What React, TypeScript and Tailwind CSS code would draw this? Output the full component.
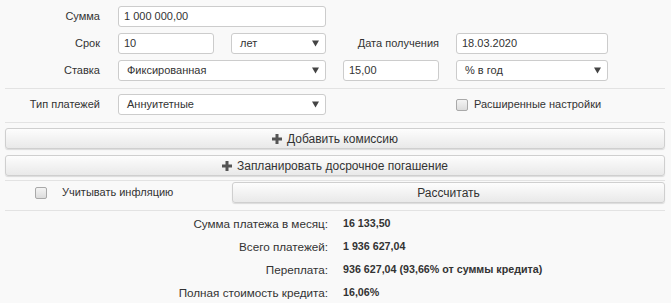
import React from "react";

const font = { fontFamily: '"Liberation Sans", Arial, sans-serif' };

function Input({ value, w }: { value: string; w: string }) {
  return (
    <div className={`${w} h-[21px] bg-white border border-[#cccccc] rounded-[3px] flex items-center pl-[5px] text-[11px] text-[#333]`}>
      {value}
    </div>
  );
}

function Select({ value, w }: { value: string; w: string }) {
  return (
    <div className={`${w} h-[21px] bg-white border border-[#cccccc] rounded-[3px] flex items-center pl-[8px] pr-[6px] text-[11px] text-[#333]`}>
      <span className="flex-1">{value}</span>
      <svg width="7" height="7" viewBox="0 0 7 7">
        <path d="M0 0.5 H7 L3.5 6.5 Z" fill="#444" />
      </svg>
    </div>
  );
}

function Checkbox() {
  return (
    <div className="w-[12px] h-[12px] rounded-[2px] border border-[#a9a9a9] bg-gradient-to-b from-[#f4f4f4] to-[#dcdcdc]" />
  );
}

function Plus() {
  return (
    <svg width="10" height="10" viewBox="0 0 10 10" className="mr-[5px]">
      <path d="M3.5 0 H6.5 V3.5 H10 V6.5 H6.5 V10 H3.5 V6.5 H0 V3.5 H3.5 Z" fill="#555" />
    </svg>
  );
}

function Btn({ children, cls = "" }: { children: React.ReactNode; cls?: string }) {
  return (
    <div className={`h-[21px] flex items-center justify-center border border-[#cfcfcf] rounded-[3px] bg-gradient-to-b from-[#fdfdfd] to-[#e9e9e9] shadow-[0_1px_1px_rgba(0,0,0,0.12)] text-[12px] text-[#333] ${cls}`}>
      {children}
    </div>
  );
}

function Label({ children }: { children: React.ReactNode }) {
  return <div className="w-[95px] text-right text-[11px] text-[#333] mr-[18px]">{children}</div>;
}

export default function App() {
  return (
    <div style={font} className="w-[671px] h-[303px] bg-[#f9f9f9] px-[5px] pt-[6px] text-[#333] overflow-hidden">
      <div className="flex flex-col gap-[6px]">
        <div className="flex items-center">
          <Label>Сумма</Label>
          <Input value="1 000 000,00" w="w-[208px]" />
        </div>
        <div className="flex items-center">
          <Label>Срок</Label>
          <Input value="10" w="w-[96px]" />
          <div className="w-[17px]" />
          <Select value="лет" w="w-[95px]" />
          <div className="w-[113px] text-right text-[11px] mr-[17px]">Дата получения</div>
          <Input value="18.03.2020" w="w-[152px]" />
        </div>
        <div className="flex items-center">
          <Label>Ставка</Label>
          <Select value="Фиксированная" w="w-[208px]" />
          <div className="w-[17px]" />
          <Input value="15,00" w="w-[96px]" />
          <div className="w-[17px]" />
          <Select value="% в год" w="w-[152px]" />
        </div>
      </div>
      <div className="mt-[7px] border-t border-[#e3e3e3] w-[660px]" />
      <div className="flex items-center mt-[5px]">
        <Label>Тип платежей</Label>
        <Select value="Аннуитетные" w="w-[208px]" />
        <div className="ml-[130px] flex items-center gap-[6px] text-[11px]">
          <Checkbox />
          <span>Расширенные настройки</span>
        </div>
      </div>
      <div className="mt-[7px] border-t border-[#e3e3e3] w-[660px]" />
      <div className="w-[660px] flex flex-col">
        <Btn cls="mt-[5px]">
          <Plus />
          Добавить комиссию
        </Btn>
        <Btn cls="mt-[6px]">
          <Plus />
          Запланировать досрочное погашение
        </Btn>
      </div>
      <div className="mt-[4px] border-t border-[#e3e3e3] w-[660px]" />
      <div className="flex items-center mt-[1px]">
        <div className="w-[227px] flex items-center text-[11px]">
          <div className="ml-[30px]">
            <Checkbox />
          </div>
          <span className="ml-[15px]">Учитывать инфляцию</span>
        </div>
        <Btn cls="w-[433px]">Рассчитать</Btn>
      </div>
      <div className="mt-[7px] border-t border-[#e3e3e3] w-[660px]" />
      <div className="grid grid-cols-[323px_1fr] gap-x-[15px] mt-[1px]">
        {[
          ["Сумма платежа в месяц:", "16 133,50"],
          ["Всего платежей:", "1 936 627,04"],
          ["Переплата:", "936 627,04 (93,66% от суммы кредита)"],
          ["Полная стоимость кредита:", "16,06%"],
        ].map(([l, v]) => (
          <React.Fragment key={l}>
            <div className="h-[23px] flex items-center justify-end text-[11.7px]">{l}</div>
            <div className="h-[23px] flex items-center font-bold text-[10.7px]">{v}</div>
          </React.Fragment>
        ))}
      </div>
    </div>
  );
}
